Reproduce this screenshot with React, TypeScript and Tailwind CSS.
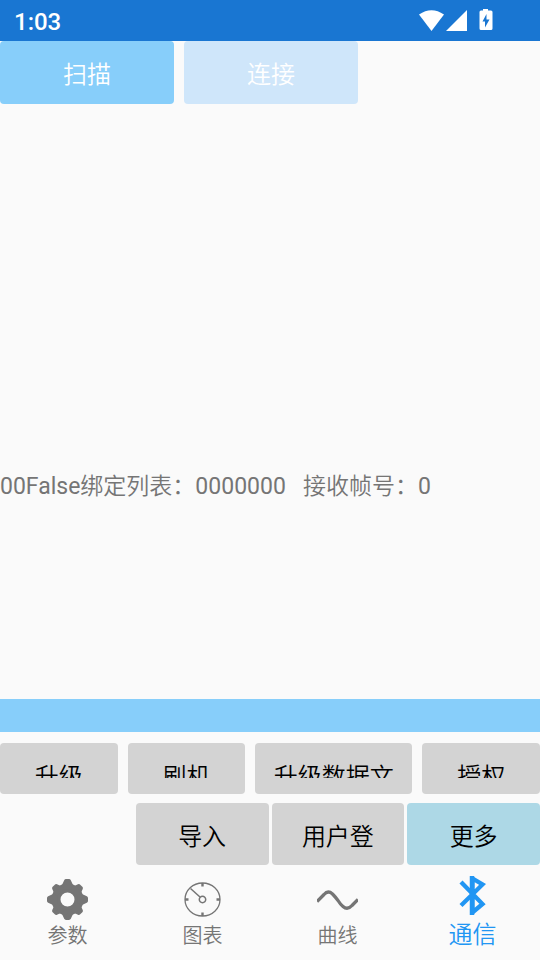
import React from "react";
import clsx from "clsx";

const StatusBar = () => {
  return (
    <header className="flex h-[41px] shrink-0 items-center justify-between bg-[#1976d2] pl-[14px] pr-[47px] text-white">
      <span className="pt-[2px] text-2xl font-medium">1:03</span>
      <svg width="74" height="24" viewBox="0 0 74 24" fill="currentColor">
        <path d="M0 5.500Q12.500 -3 25 5.500L12.500 22Z" />
        <path d="M27 22L48 1V22Z" />
        <path
          fillRule="evenodd"
          d="M64 -0.500h5v2h3q1.500 0 1.500 1.500V19.500q0 1.500-1.500 1.500H62q-1.500 0-1.500-1.500V3Q60.500 1.500 62 1.500h2ZM67.500 5L63.500 12.500H66V18.500L70.500 10.500H67.500Z"
        />
      </svg>
    </header>
  );
};

const GearIcon = () => (
  <svg width="41" height="41" viewBox="-20.5 -20.5 41 41">
    <circle r="11.500" fill="none" stroke="#757575" strokeWidth="9" />
    <g fill="#757575" stroke="#757575" strokeWidth="4" strokeLinejoin="round">
      {[0, 90, 180, 270].map((a) => (
        <path key={a} transform={`rotate(${a})`} d="M-4.500 -12L-1.500 -18.500H1.500L4.500 -12Z" />
      ))}
      {[45, 135, 225, 315].map((a) => (
        <path key={a} transform={`rotate(${a})`} d="M-3.500 -12L-1.500 -17.500H1.500L3.500 -12Z" />
      ))}
    </g>
  </svg>
);

const GaugeIcon = () => (
  <svg width="41" height="41" viewBox="-20.5 -20.5 41 41" fill="none" stroke="#757575">
    <ellipse rx="17.500" ry="16.500" strokeWidth="1.300" />
    <circle r="3.200" strokeWidth="1.500" />
    <path d="M-12 -11L-2.500 -2.500" strokeWidth="1.500" />
    <path d="M0 -16.500V-13M0 16.500V13M-17.500 0H-14M17.500 0H14" strokeWidth="2.400" />
  </svg>
);

const WaveIcon = () => (
  <svg width="41" height="41" viewBox="0 0 41 41" fill="none" stroke="#757575">
    <path
      d="M0 22.500L7 15.500Q11 11 15.500 15Q18 17.500 21 21.500Q23.500 25.500 26 27.500Q30.500 31.500 35 26.500L41 20.500"
      strokeWidth="3.300"
    />
  </svg>
);

const BluetoothIcon = () => (
  <svg width="29" height="39" viewBox="0 0 29 39" fill="none" stroke="#2196f3">
    <path d="M3 6L24.500 28L14.500 36.500V2.500L24.500 8.500L3 29.500" strokeWidth="4.300" />
    <path d="M14 0V39" strokeWidth="4.500" />
  </svg>
);

const actions = ["升级", "刷机", "升级数据文", "授权"];

const tabs = [
  { label: "参数", icon: <GearIcon /> },
  { label: "图表", icon: <GaugeIcon /> },
  { label: "曲线", icon: <WaveIcon /> },
  { label: "通信", icon: <BluetoothIcon />, active: true },
];

const App = () => {
  return (
    <div className="flex min-h-screen flex-col overflow-hidden bg-[#fafafa] font-[Roboto,'Noto_Sans_CJK_SC',sans-serif]">
      <StatusBar />
      <main className="flex grow flex-col">
        <div className="flex gap-[10px] text-2xl font-[350] text-white">
          <button className="w-[174px] rounded bg-[#87cefa] px-4 pt-[19px] pb-[13px] leading-[31px]">
            扫描
          </button>
          <button
            disabled
            className="w-[174px] rounded bg-[#cfe6fa] px-4 pt-[19px] pb-[13px] leading-[31px]"
          >
            连接
          </button>
        </div>

        <div className="grow-[13] basis-0" />
        <p className="whitespace-pre pt-[2px] text-[23px] leading-[30px] text-[#757575]">
          00False<span className="font-[350]">绑定列表：</span>0000000{"   "}
          <span className="font-[350]">接收帧号：</span>0
        </p>
        <div className="grow-[7] basis-0" />

        <div className="h-[33px] bg-[#87cefa]" />

        <div className="mt-[11px] grid grid-cols-[3fr_3fr_4fr_3fr] gap-[10px] text-2xl font-[350] text-black">
          {actions.map((label) => (
            <button key={label} className="rounded bg-[#d3d3d3] px-4 py-4">
              {/* the row is too low for its captions, so they are cut off */}
              <span className="block h-[19px] overflow-hidden whitespace-nowrap leading-9">
                {label}
              </span>
            </button>
          ))}
        </div>

        <div className="mt-[9px] grid grid-cols-4 gap-[3px] text-2xl font-[350] text-black">
          <button className="col-start-2 rounded bg-[#d3d3d3] pt-[19px] pb-[13px] leading-[30px]">
            导入
          </button>
          <button className="rounded bg-[#d3d3d3] pt-[19px] pb-[13px] leading-[30px]">用户登</button>
          <button className="rounded bg-[#add8e6] pt-[19px] pb-[13px] leading-[30px]">更多</button>
        </div>
      </main>

      <nav className="grid h-[95px] shrink-0 grid-cols-4 font-[350]">
        {tabs.map(({ label, icon, active }) => (
          <a
            key={label}
            href="#"
            className={clsx(
              "flex flex-col items-center",
              active ? "pt-[11px] text-2xl text-[#2196f3]" : "pt-[14px] text-xl text-[#757575]"
            )}
          >
            {icon}
            <span className={active ? "leading-10" : "leading-8"}>{label}</span>
          </a>
        ))}
      </nav>
    </div>
  );
};

export default App;
